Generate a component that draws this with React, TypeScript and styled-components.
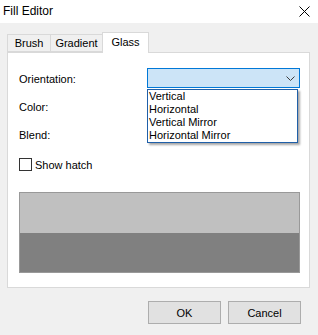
import React from "react";
import styled, { createGlobalStyle } from "styled-components";

const GlobalStyle = createGlobalStyle`
  html, body { margin: 0; padding: 0; background: #f0f0f0; }
  body { font-family: "Liberation Sans", Arial, sans-serif; font-size: 11px; color: #000; }
  * { box-sizing: border-box; }
`;

const Window = styled.div`
  width: 318px;
  height: 335px;
  display: flex;
  flex-direction: column;
  background: #f0f0f0;
`;

const TitleBar = styled.div`
  height: 23px;
  background: #ffffff;
  display: flex;
  align-items: center;
  justify-content: space-between;
  padding: 0 8px 1px 3px;
`;

const Title = styled.span`
  font-size: 12px;
  line-height: 16px;
`;

const CloseIcon = styled.svg`
  width: 11px;
  height: 11px;
  display: block;
  margin-top: 1px;
`;

const Body = styled.div`
  display: flex;
  flex-direction: column;
  padding: 9px 8px 0 7px;
`;

const TabStrip = styled.div`
  display: flex;
  align-items: flex-end;
  height: 20px;
  position: relative;
  z-index: 1;
`;

const Tab = styled.div<{ $w: number; $active?: boolean }>`
  width: ${(p) => p.$w}px;
  height: ${(p) => (p.$active ? 21 : 18)}px;
  margin-left: -1px;
  margin-bottom: ${(p) => (p.$active ? -1 : 0)}px;
  &:first-child { margin-left: 0; }
  border: 1px solid #d9d9d9;
  border-bottom: ${(p) => (p.$active ? "none" : "1px solid #d9d9d9")};
  background: ${(p) => (p.$active ? "#ffffff" : "#f0f0f0")};
  display: flex;
  justify-content: center;
  padding-top: ${(p) => (p.$active ? 2 : 1)}px;
  line-height: 14px;
  position: relative;
  z-index: ${(p) => (p.$active ? 2 : 1)};
`;

const Panel = styled.div`
  width: 303px;
  height: 236px;
  border: 1px solid #d9d9d9;
  background: #ffffff;
  padding: 15px 9px 0 11px;
  display: flex;
  flex-direction: column;
`;

const Form = styled.div`
  display: grid;
  grid-template-columns: 128px 153px;
  grid-auto-rows: 20px;
  row-gap: 8px;
  align-items: center;
`;

const Label = styled.span`
  line-height: 14px;
  padding-top: 1px;
`;

const ComboWrap = styled.div`
  position: relative;
  height: 20px;
`;

const Combo = styled.div`
  height: 20px;
  border: 1px solid #0078d7;
  background: #cce4f7;
  display: flex;
  align-items: center;
  justify-content: flex-end;
  padding-right: 4px;
`;

const Chevron = styled.svg`
  width: 9px;
  height: 5px;
  display: block;
  margin-top: 1px;
`;

const DropList = styled.ul`
  position: absolute;
  top: 21px;
  left: 0;
  width: 151px;
  margin: 0;
  padding: 0;
  list-style: none;
  background: #ffffff;
  border: 1px solid #1f5fa8;
  box-shadow: 2px 2px 2px rgba(0, 0, 0, 0.35);
  z-index: 5;
`;

const DropItem = styled.li`
  height: 13px;
  line-height: 13px;
  padding-left: 1px;
  white-space: nowrap;
`;

const CheckRow = styled.label`
  display: flex;
  align-items: center;
  gap: 3px;
  margin-top: 14px;
  height: 13px;
`;

const CheckBox = styled.span`
  width: 13px;
  height: 13px;
  border: 1px solid #333333;
  background: #ffffff;
  display: block;
`;

const Preview = styled.div`
  margin-top: 21px;
  width: 281px;
  height: 81px;
  border: 1px solid #999999;
  display: flex;
  flex-direction: column;
`;

const Band = styled.div<{ $color: string; $h: number }>`
  height: ${(p) => p.$h}px;
  background: ${(p) => p.$color};
`;

const ButtonRow = styled.div`
  display: flex;
  justify-content: flex-end;
  gap: 7px;
  padding: 13px 9px 0 0;
`;

const Button = styled.button`
  width: 73px;
  height: 23px;
  background: #e1e1e1;
  border: 1px solid #adadad;
  font-family: inherit;
  font-size: 11px;
  color: #000;
  padding: 0;
`;

export default function App() {
  return (
    <>
      <GlobalStyle />
      <Window>
        <TitleBar>
          <Title>Fill Editor</Title>
          <CloseIcon viewBox="0 0 11 11">
            <path d="M0.5 0.5 L10.5 10.5 M10.5 0.5 L0.5 10.5" stroke="#000" strokeWidth="1" fill="none" />
          </CloseIcon>
        </TitleBar>
        <Body>
          <TabStrip>
            <Tab $w={44}>Brush</Tab>
            <Tab $w={53}>Gradient</Tab>
            <Tab $w={47} $active>
              Glass
            </Tab>
          </TabStrip>
          <Panel>
            <Form>
              <Label>Orientation:</Label>
              <ComboWrap>
                <Combo>
                  <Chevron viewBox="0 0 9 5">
                    <path d="M0.5 0.5 L4.5 4.5 L8.5 0.5" stroke="#3c3c3c" strokeWidth="1" fill="none" />
                  </Chevron>
                </Combo>
                <DropList>
                  <DropItem>Vertical</DropItem>
                  <DropItem>Horizontal</DropItem>
                  <DropItem>Vertical Mirror</DropItem>
                  <DropItem>Horizontal Mirror</DropItem>
                </DropList>
              </ComboWrap>
              <Label>Color:</Label>
              <span />
              <Label>Blend:</Label>
              <span />
            </Form>
            <CheckRow>
              <CheckBox />
              <span>Show hatch</span>
            </CheckRow>
            <Preview>
              <Band $color="#c0c0c0" $h={40} />
              <Band $color="#808080" $h={39} />
            </Preview>
          </Panel>
          <ButtonRow>
            <Button>OK</Button>
            <Button>Cancel</Button>
          </ButtonRow>
        </Body>
      </Window>
    </>
  );
}
